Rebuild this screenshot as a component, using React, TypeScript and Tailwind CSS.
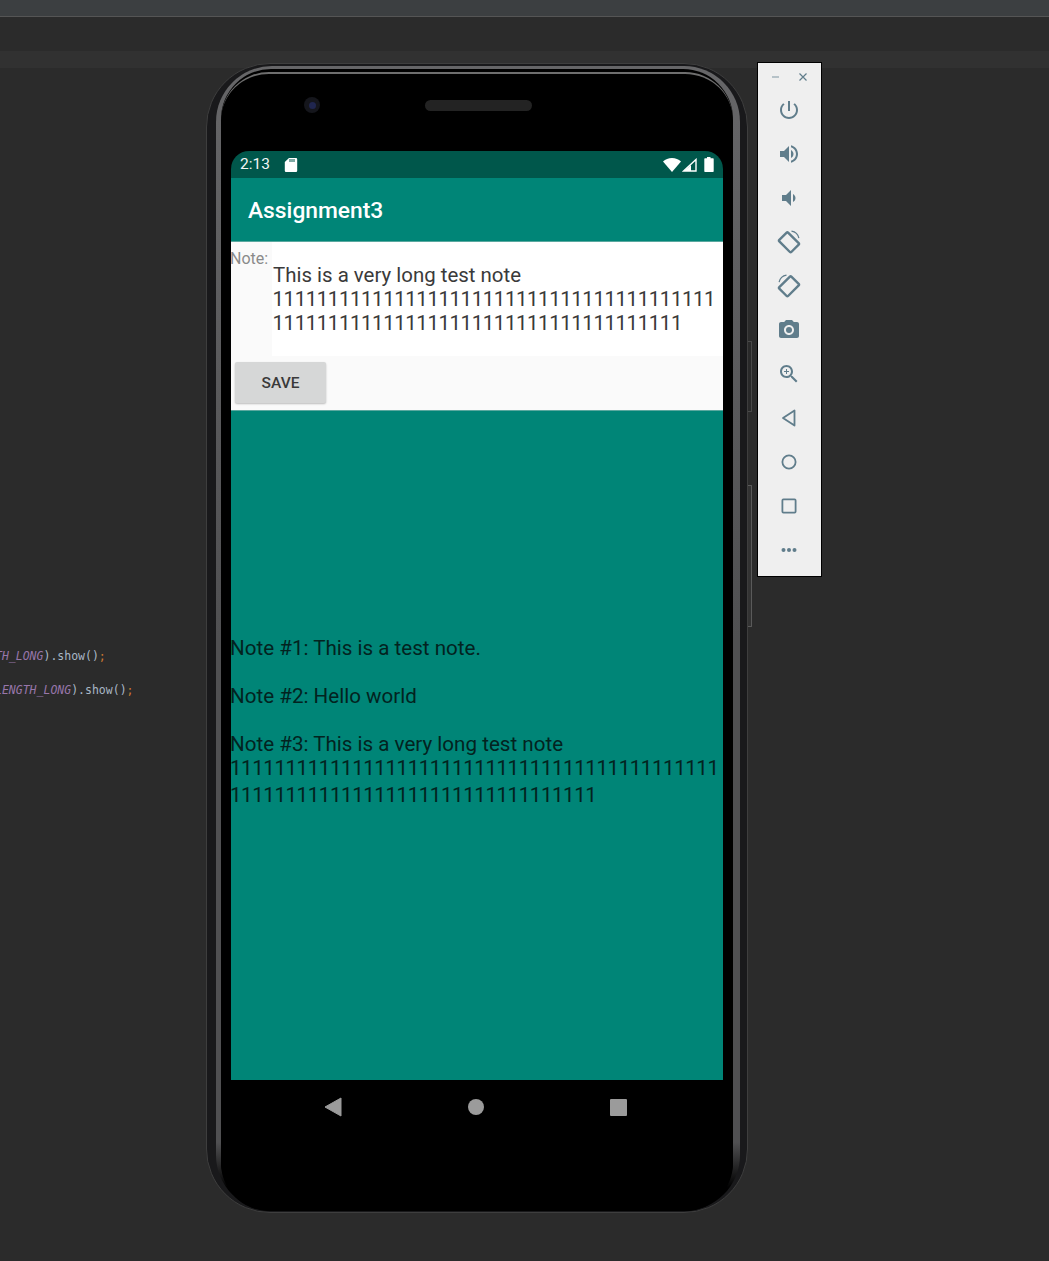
import React from "react";

const ic = "#607d8b";

function Icon({ children }: { children: React.ReactNode }) {
  return (
    <div className="h-[44px] flex items-center justify-center pr-[1px]">
      <svg width="24" height="24" viewBox="0 0 24 24" fill={ic}>
        {children}
      </svg>
    </div>
  );
}

function Toolbar() {
  return (
    <div className="w-[65px] h-[515px] bg-[#efefef] border border-black flex flex-col">
      <div className="h-[25px] flex items-center justify-between pl-[13px] pr-[13px] pt-[2px]">
        <svg width="10" height="10" viewBox="0 0 10 10"><path d="M1 5h7" stroke="#8fa3ad" strokeWidth="1.2" /></svg>
        <svg width="10" height="10" viewBox="0 0 10 10"><path d="M1.5 1.5l7 7M8.5 1.5l-7 7" stroke="#607d8b" strokeWidth="1.2" /></svg>
      </div>
      <div className="flex flex-col">
        <Icon><path d="M13 3h-2v10h2V3zm4.83 2.17l-1.42 1.42C17.99 7.86 19 9.81 19 12c0 3.87-3.13 7-7 7s-7-3.13-7-7c0-2.19 1.01-4.14 2.58-5.42L6.17 5.17C4.23 6.82 3 9.26 3 12c0 4.97 4.03 9 9 9s9-4.03 9-9c0-2.74-1.23-5.18-3.17-6.83z" /></Icon>
        <Icon><path d="M3 9v6h4l5 5V4L7 9H3zm13.5 3c0-1.77-1.02-3.29-2.5-4.03v8.05c1.48-.73 2.5-2.25 2.5-4.02zM14 3.23v2.06c2.89.86 5 3.54 5 6.71s-2.11 5.85-5 6.71v2.06c4.01-.91 7-4.49 7-8.77s-2.99-7.86-7-8.77z" /></Icon>
        <Icon><path d="M18.5 12c0-1.77-1.02-3.29-2.5-4.03v8.05c1.48-.73 2.5-2.25 2.5-4.02zM5 9v6h4l5 5V4L9 9H5z" /></Icon>
        <Icon>
          <g fill="none" stroke={ic}>
            <rect x="5.8" y="3.8" width="12.4" height="17" rx="1" strokeWidth="2.4" transform="rotate(-45 12 12.3)" />
            <path d="M14.5 1.2c3.6.6 6.6 3.4 7.4 7" strokeWidth="1.2" />
          </g>
        </Icon>
        <Icon>
          <g fill="none" stroke={ic} transform="translate(24 0) scale(-1 1)">
            <rect x="5.8" y="3.8" width="12.4" height="17" rx="1" strokeWidth="2.4" transform="rotate(-45 12 12.3)" />
            <path d="M14.5 1.2c3.6.6 6.6 3.4 7.4 7" strokeWidth="1.2" />
          </g>
        </Icon>
        <Icon><path fillRule="evenodd" d="M9 2L7.17 4H4c-1.1 0-2 .9-2 2v12c0 1.1.9 2 2 2h16c1.1 0 2-.9 2-2V6c0-1.1-.9-2-2-2h-3.17L15 2H9zm3 15c-2.76 0-5-2.24-5-5s2.24-5 5-5 5 2.24 5 5-2.24 5-5 5z" /><circle cx="12" cy="12" r="3" /></Icon>
        <Icon><path d="M15.5 14h-.79l-.28-.27C15.41 12.59 16 11.11 16 9.5 16 5.91 13.09 3 9.5 3S3 5.91 3 9.5 5.91 16 9.5 16c1.61 0 3.09-.59 4.23-1.57l.27.28v.79l5 4.99L20.49 19l-4.99-5zm-6 0C7.01 14 5 11.99 5 9.5S7.01 5 9.5 5 14 7.01 14 9.5 11.99 14 9.5 14z" /><path d="M12 10h-2v2H9v-2H7V9h2V7h1v2h2v1z" /></Icon>
        <Icon><path d="M17.5 4.500v15L6 12z" fill="none" stroke={ic} strokeWidth="1.8" strokeLinejoin="round" /></Icon>
        <Icon><circle cx="12" cy="12" r="6.6" fill="none" stroke={ic} strokeWidth="1.8" /></Icon>
        <Icon><rect x="5.4" y="5.4" width="13.2" height="13.2" rx="1" fill="none" stroke={ic} strokeWidth="1.8" /></Icon>
        <Icon><circle cx="6.5" cy="12" r="2" /><circle cx="12" cy="12" r="2" /><circle cx="17.5" cy="12" r="2" /></Icon>
      </div>
    </div>
  );
}

function Screen() {
  return (
    <div className="w-[492px] flex flex-col font-['Roboto',sans-serif]">
      <div className="h-[27px] bg-[#00574b] rounded-t-[18px] flex items-center pl-[9px] pr-[9px] text-white">
        <span className="text-[15.5px] leading-[27px] text-[#f2f5f4]">2:13</span>
        <svg className="ml-[14px]" width="14" height="16" viewBox="0 0 14 16" fill="#fff">
          <path d="M5 1h7a1.200 1.200 0 0 1 1.200 1.200v11.600A1.200 1.200 0 0 1 12 15H2a1.200 1.200 0 0 1-1.200-1.200V5z" />
          <path d="M6 2v3M8 2v3M10 2v3" stroke="#00574b" strokeWidth="1" />
        </svg>
        <div className="flex-1" />
        <svg width="18" height="14" viewBox="0 0 18 14" fill="#fff"><path d="M0 3.600C2.400 1.400 5.500 0 9 0s6.600 1.400 9 3.600L9 14z" /></svg>
        <svg className="ml-[1px]" width="15" height="14" viewBox="0 0 15 14" fill="none"><path d="M14 1.500V13H1.500z" fill="#00574b" stroke="#fff" strokeWidth="1.400" /><path d="M9 13V7L2 13z" fill="#fff" /></svg>
        <svg className="ml-[7px]" width="10" height="15" viewBox="0 0 10 15" fill="#fff"><path d="M3 0h3.500v1.200H9a.7.7 0 0 1 .7.7v12.400a.7.7 0 0 1-.7.7H1a.7.7 0 0 1-.7-.7V1.900a.7.7 0 0 1 .7-.7h2z" /></svg>
      </div>
      <div className="h-[64px] bg-[#008577] flex items-center pl-[18px] pt-[2px] border-b border-[#5aa89f]">
        <span className="text-[22.8px] font-medium text-white leading-[60px] -ml-[1px]">Assignment3</span>
      </div>
      <div className="h-[114px] bg-[#fafafa] flex">
        <div className="w-[41px] pt-[9px] text-[16px] leading-[16px] text-[#8a8a8a]"><div className="-ml-[1px]">Note:</div></div>
        <div className="flex-1 bg-white pt-[21px] text-[20.45px] leading-[24px] text-[#3a3a3a] whitespace-nowrap">
          <div className="ml-[1px]">This is a very long test note</div>
          <div className="ml-[0.5px] tracking-[-0.42px]">1111111111111111111111111111111111111111</div>
          <div className="ml-[0.5px] tracking-[-0.42px]">1111111111111111111111111111111111111</div>
        </div>
      </div>
      <div className="h-[54px] bg-[#fafafa] pl-[4px] pt-[6px]">
        <div className="w-[91px] h-[41px] pt-[2px] bg-[#d6d7d7] rounded-[2px] shadow-[0_1px_2px_rgba(0,0,0,0.25)] flex items-center justify-center text-[15.5px] font-medium text-[#3a3a3a]">
          SAVE
        </div>
      </div>
      <div className="h-[670px] bg-[#008577] pt-[225px] border-t border-[#5aa89f] text-[20.6px] leading-[24px] text-[#03231f] whitespace-nowrap">
        <div className="-ml-[1px]">
          <div>Note #1: This is a test note.</div>
          <div className="mt-[24px]">Note #2: Hello world</div>
          <div className="mt-[24px]">Note #3: This is a very long test note</div>
          <div className="tracking-[-0.47px]">11111111111111111111111111111111111111111111</div>
          <div className="mt-[3px] tracking-[-0.47px]">111111111111111111111111111111111</div>
        </div>
      </div>
      <div className="h-[54px] bg-black flex items-center relative">
        <div className="flex items-center w-full">
          <svg className="ml-[93px]" width="18" height="20" viewBox="0 0 18 20" fill="#9b9b9b"><path d="M17 1v18L1 10z" stroke="#9b9b9b" strokeLinejoin="round" /></svg>
          <div className="ml-[126px] w-[16px] h-[16px] rounded-full bg-[#9b9b9b]" />
          <div className="ml-[126px] w-[17px] h-[17px] rounded-[1px] bg-[#9b9b9b]" />
        </div>
      </div>
    </div>
  );
}

function Phone() {
  return (
    <div className="relative w-[542px] h-[1150px]">
      <div className="absolute left-[542px] top-[278px] w-[4px] h-[71px] border border-l-0 border-[#4a4a4a] rounded-r-[1px] bg-[#2a2a2a]" />
      <div className="absolute left-[542px] top-[422px] w-[4px] h-[142px] border border-l-0 border-[#5a5a5a] rounded-r-[1px] bg-[#333333]" />
      <div className="h-full rounded-[64px] border border-[#3e3e3e] bg-[#19191b] pt-[2px] pl-[9px] pr-[7px] pb-[1px]">
        <div className="h-full rounded-[56px] bg-[linear-gradient(to_bottom,#666668_0%,#505052_50%,#505052_94%,#000_98%)] pt-[3px] pl-[5px] pr-[7px]">
          <div className="h-full rounded-[50px] bg-black pt-[3px]">
            <div className="h-full rounded-[48px] border-t-2 border-[#6e6e6e] bg-black pl-[10px]">
              <div className="h-[77px] flex items-start">
                <div className="mt-[23px] ml-[73px] w-[16px] h-[16px] rounded-full bg-[#15161c] flex items-center justify-center">
                  <div className="w-[7px] h-[7px] rounded-full bg-[#20264f]" />
                </div>
                <div className="mt-[26px] ml-[105px] w-[107px] h-[11px] rounded-full bg-[#232323]" />
              </div>
              <Screen />
            </div>
          </div>
        </div>
      </div>
    </div>
  );
}

export default function App() {
  return (
    <div className="w-[1049px] h-[1261px] overflow-hidden bg-[#2b2b2b] flex flex-col">
      <div className="h-[16px] bg-[#3c3f41] border-b border-[#555555] box-content" />
      <div className="h-[34px]" />
      <div className="h-[17px] bg-[#313131]" />
      <div className="flex -mt-[5px]">
        <div className="w-[206px] pt-[576px] overflow-hidden font-['DejaVu_Sans_Mono',monospace] text-[11.5px] leading-[34px] whitespace-nowrap text-[#a9b7c6]">
          <div className="-ml-[5px]"><span className="text-[#9876aa] italic">TH_LONG</span>).show()<span className="text-[#cc7832]">;</span></div>
          <div className="-ml-[5px]"><span className="text-[#9876aa] italic">LENGTH_LONG</span>).show()<span className="text-[#cc7832]">;</span></div>
        </div>
        <Phone />
        <div className="ml-[9px] -mt-[1px]"><Toolbar /></div>
      </div>
    </div>
  );
}
